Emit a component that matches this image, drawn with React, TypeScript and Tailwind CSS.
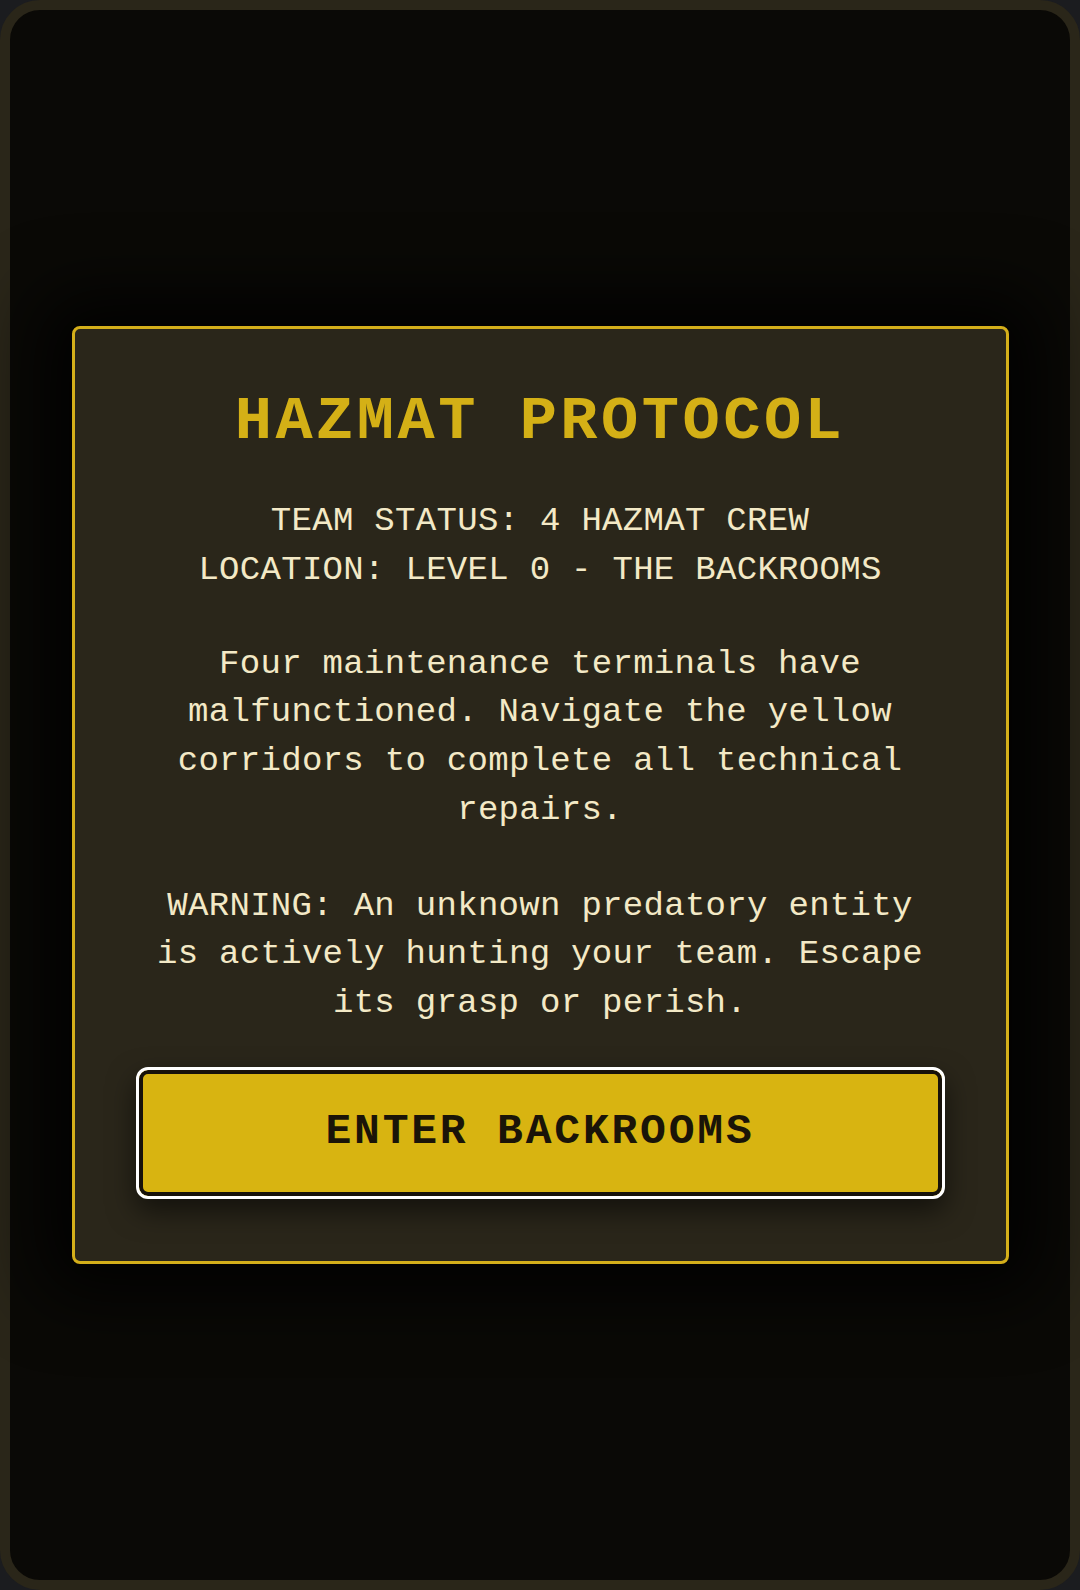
export default function App() {
  return (
    <div className="h-[1590px] w-full bg-[#1b1c1f]">
      {/* device frame */}
      <div className="flex h-full w-full items-center justify-center rounded-[40px] border-[10px] border-[#2a2619] bg-[#0a0906]">
        {/* briefing card */}
        <div className="w-[937px] rounded-[8px] border-[3px] border-[#d4af1a] bg-[#2a261a] px-[61px] pt-[58px] pb-[62px] text-center font-['Liberation_Mono',monospace] shadow-[0_0_70px_30px_rgba(0,0,0,0.85)]">
          <h1 className="mb-[40px] text-[62px] leading-[70px] font-bold tracking-[3.5px] text-[#d4b016]">
            HAZMAT PROTOCOL
          </h1>

          <div className="mx-auto max-w-[795px] text-[34px] leading-[48.7px] tracking-[0.3px] text-[#f3e9c6]">
            <p className="mb-[45px]">
              TEAM STATUS: 4 HAZMAT CREW
              <br />
              LOCATION: LEVEL 0 - THE BACKROOMS
            </p>
            <p className="mb-[47px]">
              Four maintenance terminals have malfunctioned. Navigate the yellow corridors to complete all technical
              repairs.
            </p>
            <p className="mb-[39px]">
              WARNING: An unknown predatory entity is actively hunting your team. Escape its grasp or perish.
            </p>
          </div>

          <button className="h-[132px] w-full rounded-[12px] border-[3px] border-white bg-[#d8b411] text-[43px] font-bold tracking-[2.8px] text-[#1a1408] shadow-[inset_0_0_0_4px_#17120a,0_12px_28px_rgba(0,0,0,0.55)]">
            ENTER BACKROOMS
          </button>
        </div>
      </div>
    </div>
  )
}
